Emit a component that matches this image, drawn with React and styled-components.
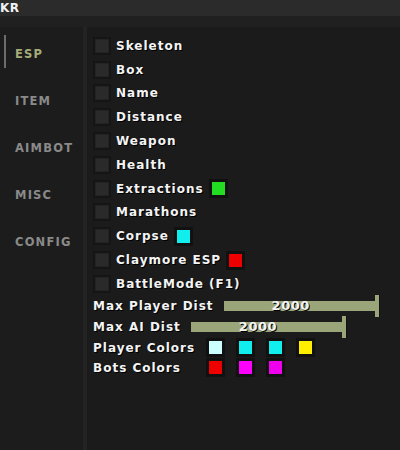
import styled, { createGlobalStyle } from 'styled-components';

// GLOBAL
const GlobalStyle = createGlobalStyle`
  html, body {
    margin: 0;
    padding: 0;
    background: #1e1e1e;
    width: 400px;
    height: 450px;
    overflow: hidden;
  }
  #root {
    height: 450px;
  }
`;

// STYLES
const Window = styled.div`
  display: flex;
  flex-direction: column;
  height: 450px;
  font-family: 'DejaVu Sans', 'Liberation Sans', sans-serif;
  font-weight: bold;
`;

const TitleBar = styled.div`
  height: 16px;
  background: #2b2b2b;
  color: #f2f2f2;
  font-size: 12px;
  line-height: 16px;
  letter-spacing: 0.5px;
`;

const Body = styled.div`
  flex: 1;
  display: flex;
  padding-top: 11px;
  background: #202020;
`;

const Sidebar = styled.div`
  width: 83px;
  background: #1c1c1c;
  display: flex;
  flex-direction: column;
  padding-top: 3px;
  border-right: 4px solid #232323;
`;

const Tab = styled.div`
  position: relative;
  height: 47px;
  display: flex;
  align-items: center;
  padding-left: 15px;
  font-size: 11.5px;
  letter-spacing: 1.2px;
  color: ${(props) => (props.active ? '#a4ad7a' : '#8a8a8a')};

  &::before {
    content: '';
    display: ${(props) => (props.active ? 'block' : 'none')};
    position: absolute;
    left: 4px;
    top: 5px;
    width: 2px;
    height: 33px;
    background: #6d6d6d;
  }
`;

const Content = styled.div`
  flex: 1;
  background: #1b1b1b;
  padding: 7px 0 0 6px;
  color: #f4f4f4;
  font-size: 12px;
  letter-spacing: 1px;
  text-shadow: 1px 1px 0 #000;
`;

const CheckRow = styled.div`
  height: 23.8px;
  display: flex;
  align-items: center;
`;

const CheckBox = styled.div`
  width: 14px;
  height: 14px;
  background: #2a2a2a;
  border: 2px solid #151515;
  box-shadow: inset 0 0 0 1px #232323;
  margin-right: 5px;
`;

const Swatch = styled.div`
  width: 13px;
  height: 13px;
  background: ${(props) => props.color};
  border: 3px solid #111;
  margin-left: ${(props) => props.offset || 0}px;
`;

const SliderRow = styled.div`
  height: 21px;
  display: flex;
  align-items: center;
`;

const SliderLabel = styled.span`
  margin-right: 10px;
`;

const Track = styled.div`
  width: 151px;
  height: 10px;
  background: #9aa67a;
  display: flex;
  align-items: center;
  padding-left: 48px;
  box-sizing: border-box;
  font-size: 13px;
  line-height: 10px;
  letter-spacing: 0.5px;
`;

const Handle = styled.div`
  width: 4px;
  height: 22px;
  background: #9aa67a;
  box-shadow: 1px 0 0 #111;
`;

const ColorRow = styled.div`
  height: 20px;
  display: flex;
  align-items: center;
  gap: 11px;
`;

const ColorLabel = styled.span`
  width: 113px;
  margin-right: -11px;
`;

const tabs = ['ESP', 'ITEM', 'AIMBOT', 'MISC', 'CONFIG'];

const checks = [
  { label: 'Skeleton' },
  { label: 'Box' },
  { label: 'Name' },
  { label: 'Distance' },
  { label: 'Weapon' },
  { label: 'Health' },
  { label: 'Extractions', color: '#22dd22' },
  { label: 'Marathons' },
  { label: 'Corpse', color: '#11eeee' },
  { label: 'Claymore ESP', color: '#ee0000' },
  { label: 'BattleMode (F1)' },
];

const sliders = [
  { label: 'Max Player Dist', value: 2000 },
  { label: 'Max AI Dist', value: 2000 },
];

const colorRows = [
  { label: 'Player Colors', colors: ['#ccffff', '#11eeee', '#11eeee', '#ffee00'] },
  { label: 'Bots Colors', colors: ['#ee0000', '#ff00ff', '#ee00ee'] },
];

function App() {
  return (
    <Window>
      <GlobalStyle />
      <TitleBar>KR</TitleBar>
      <Body>
        <Sidebar>
          {tabs.map((t, i) => (
            <Tab key={t} active={i === 0}>
              {t}
            </Tab>
          ))}
        </Sidebar>
        <Content>
          {checks.map((c) => (
            <CheckRow key={c.label}>
              <CheckBox />
              <span>{c.label}</span>
              {c.color && <Swatch color={c.color} offset={5} />}
            </CheckRow>
          ))}
          {sliders.map((s) => (
            <SliderRow key={s.label}>
              <SliderLabel>{s.label}</SliderLabel>
              <Track>{s.value}</Track>
              <Handle />
            </SliderRow>
          ))}
          {colorRows.map((r) => (
            <ColorRow key={r.label}>
              <ColorLabel>{r.label}</ColorLabel>
              {r.colors.map((c, i) => (
                <Swatch key={i} color={c} />
              ))}
            </ColorRow>
          ))}
        </Content>
      </Body>
    </Window>
  );
}

export default App;
